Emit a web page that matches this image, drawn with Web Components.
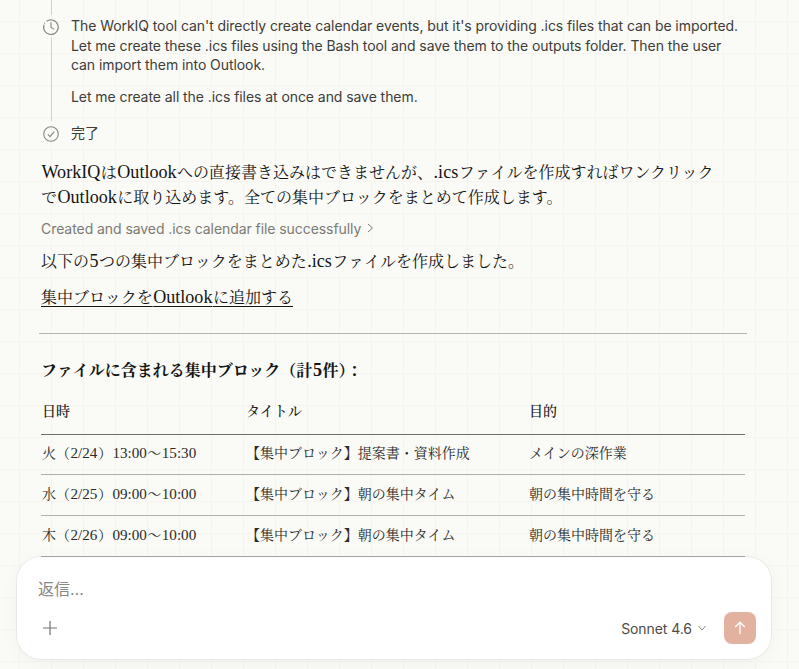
<!DOCTYPE html>
<html lang="ja">
<head>
<meta charset="utf-8">
<title>WorkIQ</title>
<style>
  html, body { margin: 0; height: 100%; }
  body {
    position: relative;
    overflow: hidden;
    background-color: #fafaf6;
    background-image:
      linear-gradient(to right, #f5f4ef 1px, transparent 1px),
      linear-gradient(to bottom, #f5f4ef 1px, transparent 1px);
    background-size: 32px 32px;
    background-position: 19px 21px;
    font-family: "Liberation Serif", "Noto Serif CJK JP", "Noto Sans CJK JP", serif;
    color: #141413;
  }
</style>
</head>
<body>

<chat-thread>
  <thought-step icon="clock" line-above line-below>
    <p>The WorkIQ tool can't directly create calendar events, but it's providing .ics files that can be imported. Let me create these .ics files using the Bash tool and save them to the outputs folder. Then the user can import them into Outlook.</p>
    <p>Let me create all the .ics files at once and save them.</p>
  </thought-step>
  <thought-step icon="check">
    <p>完了</p>
  </thought-step>
  <chat-para class="first"><lat-text>WorkIQ</lat-text>は<lat-text>Outlook</lat-text>への直接書き込みはできませんが、<lat-text>.ics</lat-text>ファイルを作成すればワンクリックで<lat-text>Outlook</lat-text>に取り込めます。全ての集中ブロックをまとめて作成します。</chat-para>
  <tool-summary>Created and saved .ics calendar file successfully</tool-summary>
  <chat-para>以下の<lat-text>5</lat-text>つの集中ブロックをまとめた<lat-text>.ics</lat-text>ファイルを作成しました。</chat-para>
  <chat-para link>集中ブロックを<lat-text>Outlook</lat-text>に追加する</chat-para>
  <chat-rule></chat-rule>
  <chat-para heading>ファイルに含まれる集中ブロック（計<lat-text>5</lat-text>件）：</chat-para>
  <block-table>
    <block-row head><span>日時</span><span>タイトル</span><span>目的</span></block-row>
    <block-row><span>火（<lat-text>2/24</lat-text>）<lat-text>13:00</lat-text>～<lat-text>15:30</lat-text></span><span>【集中ブロック】提案書・資料作成</span><span>メインの深作業</span></block-row>
    <block-row><span>水（<lat-text>2/25</lat-text>）<lat-text>09:00</lat-text>～<lat-text>10:00</lat-text></span><span>【集中ブロック】朝の集中タイム</span><span>朝の集中時間を守る</span></block-row>
    <block-row><span>木（<lat-text>2/26</lat-text>）<lat-text>09:00</lat-text>～<lat-text>10:00</lat-text></span><span>【集中ブロック】朝の集中タイム</span><span>朝の集中時間を守る</span></block-row>
  </block-table>
</chat-thread>

<reply-box></reply-box>

<script>
const ICONS = {
  clock: `<path d="M5.6 4.3A7.3 7.3 0 1 1 3.1 7.6"/><path d="M2.8 10.2h.01M3.6 6.2h.01" stroke-width="1.2" stroke-linecap="round"/><path d="M10 5.2V10.4L13.3 12.4"/>`,
  check: `<circle cx="10" cy="10" r="7.3"/><path d="M6.8 10.4L9 12.6L13.3 7.6"/>`
}

class ChatThread extends HTMLElement {
  constructor() {
    super()
    this.attachShadow({mode: 'open'}).innerHTML = `
<style>
  :host { display: block; padding: 0 52px 0 41px; }
</style>
<slot></slot>`
  }
}

class ThoughtStep extends HTMLElement {
  constructor() {
    super()
    let icon = this.getAttribute('icon')
    let above = this.hasAttribute('line-above')
    let below = this.hasAttribute('line-below')
    this.attachShadow({mode: 'open'}).innerHTML = `
<style>
  :host {
    display: grid;
    grid-template-columns: 20px 1fr;
    column-gap: 10px;
    font: 14px/19.6px Inter, "Noto Sans CJK JP", sans-serif;
    letter-spacing: -0.067px;
    color: #3d3d3a;
  }
  #rail { display: flex; flex-direction: column; align-items: center; }
  #rail i { display: block; width: 1px; background: #d3d1cb; }
  #above { height: 15px; flex: none; display: ${above ? 'block' : 'none'} !important; }
  #below { flex: 1; margin: 1px 0 2px; visibility: ${below ? 'visible' : 'hidden'}; }
  svg { display: block; width: 20px; height: 20px; fill: none; stroke: #8a8985; stroke-width: 1.1; margin-top: ${above ? 2 : 1}px; flex: none; }
  #body { padding-top: ${above ? 16 : 0}px; padding-bottom: ${below ? 17 : 0}px; }
  ::slotted(p) { margin: 0 0 12px; }
  ::slotted(p:last-child) { margin-bottom: 0; }
</style>
<div id="rail">
  <i id="above"></i>
  <svg viewBox="0 0 20 20">${ICONS[icon]}</svg>
  <i id="below"></i>
</div>
<div id="body"><slot></slot></div>`
  }
}

// Latin runs sit larger than the CJK text around them.
// no whitespace in the template here, it would show up as a space in the line
class LatText extends HTMLElement {
  constructor() {
    super()
    this.attachShadow({mode: 'open'}).innerHTML =
      `<style>:host { display: inline; font-size: var(--lat-size, 1.13em); line-height: 0; margin: 0 .5px; }</style><slot></slot>`
  }
}

class ChatPara extends HTMLElement {
  constructor() {
    super()
    this.attachShadow({mode: 'open'}).innerHTML = `
<style>
  :host { display: block; font-size: 16px; line-height: 25px; margin: 10px 26px 0 0; }
  :host(.first) { margin-top: 13px; }
  :host([link]) { margin-top: 11px; }
  :host([link]) span { text-decoration: underline; text-underline-offset: 3px; }
  :host([heading]) { font-weight: 700; margin: 23.5px 0 0 0; }
</style>
<span><slot></slot></span>`
  }
}

class ToolSummary extends HTMLElement {
  constructor() {
    super()
    this.attachShadow({mode: 'open'}).innerHTML = `
<style>
  :host {
    display: flex; align-items: center; gap: 6px;
    font: 14px/21px Inter, "Noto Sans CJK JP", sans-serif;
    letter-spacing: -0.067px;
    color: #7b7a75; margin-top: 7.5px;
  }
  svg { width: 7px; height: 10px; fill: none; stroke: #7b7a75; stroke-width: 1; }
</style>
<slot></slot>
<svg viewBox="0 0 7 10"><path d="M1 1L5.5 5L1 9"/></svg>`
  }
}

class ChatRule extends HTMLElement {
  constructor() {
    super()
    this.attachShadow({mode: 'open'}).innerHTML = `
<style>
  :host { display: block; height: 1px; background: #b5b4af; margin: 23.5px 0 0 -2px; }
</style>`
  }
}

class BlockTable extends HTMLElement {
  constructor() {
    super()
    this.attachShadow({mode: 'open'}).innerHTML = `
<style>
  :host { display: block; margin: 7.5px 2px 0 0; --lat-size: 1.08em; }
</style>
<slot></slot>`
  }
}

class BlockRow extends HTMLElement {
  constructor() {
    super()
    this.attachShadow({mode: 'open'}).innerHTML = `
<style>
  :host {
    display: grid;
    grid-template-columns: 204px 283px 1fr;
    height: 40.67px;
    box-sizing: border-box;
    align-items: center;
    font-size: 14px;
    border-bottom: 1px solid #b0afaa;
    padding: 0 0 4px 1px;
    color: #2b2b29;
  }
  :host([head]) { height: 44.2px; padding-bottom: 3px; border-bottom-color: #6f6e6a; color: #141413; font-weight: 500; }
</style>
<slot></slot>`
  }
}

class ReplyBox extends HTMLElement {
  constructor() {
    super()
    this.attachShadow({mode: 'open'}).innerHTML = `
<style>
  :host {
    position: absolute; left: 17px; top: 557px;
    width: 754px; height: 102px; box-sizing: border-box;
    display: flex; flex-direction: column; justify-content: space-between;
    padding: 21px 15px 15px 21px;
    background: #fff; border-radius: 24px;
    box-shadow: 0 0 0 1px rgba(31,30,29,.06), 0 4px 20px rgba(0,0,0,.04);
    font-family: Inter, "Noto Sans CJK JP", sans-serif;
  }
  #hint { font-size: 16px; line-height: 22px; color: #8a8985; }
  #bar { display: flex; align-items: center; }
  #plus { width: 16px; height: 16px; margin-left: 4px; stroke: #73726e; stroke-width: 1.2; fill: none; }
  #model { margin-left: auto; font-size: 14px; letter-spacing: -0.067px; color: #4d4c48; }
  #caret { width: 8px; height: 8px; margin: 0 18px 0 6px; stroke: #8a8985; fill: none; stroke-width: 1; }
  #send { width: 32px; height: 32px; border-radius: 8px; background: #e2b1a0; display: flex; align-items: center; justify-content: center; }
  #send svg { width: 16px; height: 16px; stroke: #fff; stroke-width: 1.3; fill: none; }
</style>
<div id="hint">返信…</div>
<div id="bar">
  <svg id="plus" viewBox="0 0 16 16"><path d="M8 1V15M1 8H15"/></svg>
  <span id="model">Sonnet 4.6</span>
  <svg id="caret" viewBox="0 0 8 8"><path d="M0.5 2L4 6L7.5 2"/></svg>
  <div id="send"><svg viewBox="0 0 16 16"><path d="M8 14V2.5M3.2 7L8 2.2L12.8 7"/></svg></div>
</div>`
  }
}

customElements.define('chat-thread', ChatThread)
customElements.define('thought-step', ThoughtStep)
customElements.define('lat-text', LatText)
customElements.define('chat-para', ChatPara)
customElements.define('tool-summary', ToolSummary)
customElements.define('chat-rule', ChatRule)
customElements.define('block-table', BlockTable)
customElements.define('block-row', BlockRow)
customElements.define('reply-box', ReplyBox)
</script>
</body>
</html>
